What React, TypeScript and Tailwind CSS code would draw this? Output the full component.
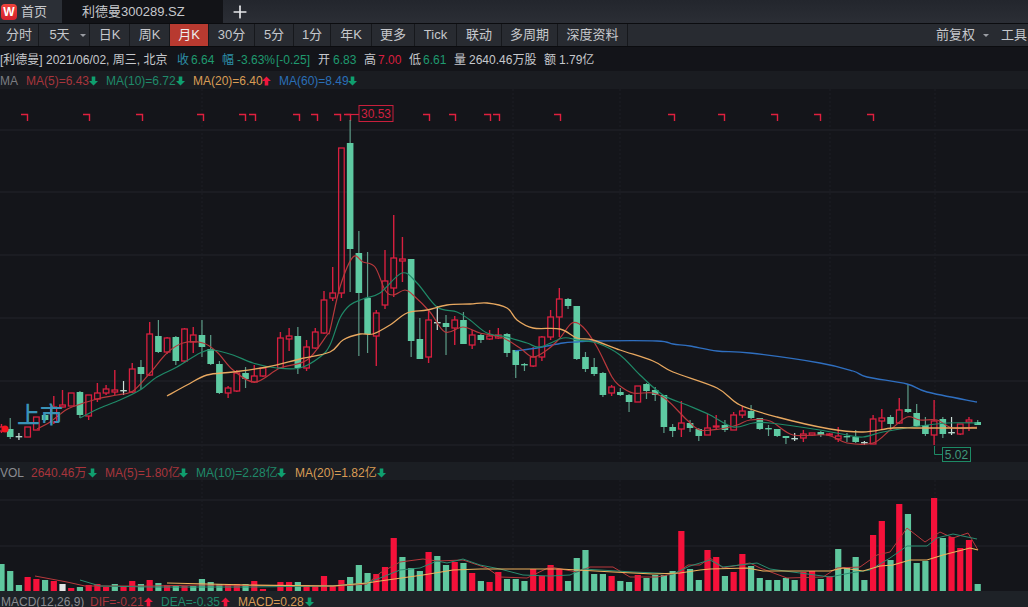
import React from "react";
import { Plus } from "lucide-react";

const FONT = '"Liberation Sans", "Noto Sans CJK SC", sans-serif';

// [high, bodyTop, bodyBottom, low, colour] in page pixels. r = up, g = down, w = flat, n = no trade
type Candle = [number, number, number, number, string];
const candles: Candle[] = [
  [424, 427, 431, 433, "r"], [418, 429, 437, 439, "g"], [433, 436, 437, 440, "w"], [427, 427, 437, 437, "r"],
  [417, 417, 430, 430, "r"], [413, 415, 420, 421, "g"], [396, 407, 422, 424, "r"], [390, 405, 407, 408, "r"],
  [393, 393, 406, 406, "r"], [391, 392, 415, 418, "g"], [395, 395, 416, 420, "r"], [383, 393, 399, 402, "r"],
  [385, 389, 393, 395, "r"], [370, 390, 392, 395, "r"], [381, 390, 391, 395, "w"], [363, 369, 392, 393, "r"],
  [360, 367, 374, 389, "g"], [322, 334, 375, 376, "r"], [320, 336, 352, 353, "g"], [337, 338, 352, 354, "r"],
  [336, 337, 361, 365, "g"], [328, 329, 361, 363, "r"], [327, 335, 342, 353, "r"], [320, 335, 347, 357, "g"],
  [335, 349, 364, 365, "g"], [361, 364, 393, 394, "g"], [386, 388, 393, 398, "r"], [370, 373, 391, 392, "r"],
  [367, 373, 379, 388, "g"], [365, 376, 382, 383, "r"], [367, 368, 376, 377, "r"], [0, 0, 0, 0, "n"],
  [332, 338, 368, 369, "r"], [328, 336, 339, 351, "r"], [327, 336, 368, 374, "g"], [340, 347, 368, 371, "r"],
  [328, 332, 348, 349, "r"], [291, 300, 333, 334, "r"], [267, 293, 298, 301, "r"], [148, 148, 293, 298, "r"],
  [120, 143, 249, 292, "g"], [231, 253, 293, 356, "g"], [252, 298, 334, 353, "g"], [310, 313, 336, 366, "r"],
  [250, 281, 305, 309, "r"], [215, 258, 288, 297, "r"], [237, 259, 261, 282, "r"], [259, 259, 341, 357, "g"],
  [318, 339, 359, 359, "g"], [310, 320, 357, 363, "r"], [306, 322, 323, 330, "w"], [315, 323, 327, 355, "g"],
  [316, 320, 328, 345, "r"], [312, 320, 344, 344, "g"], [330, 335, 345, 349, "r"], [334, 335, 340, 343, "g"],
  [330, 336, 339, 340, "r"], [328, 335, 338, 339, "r"], [333, 334, 353, 357, "g"], [350, 350, 365, 378, "g"],
  [363, 364, 365, 371, "g"], [347, 357, 366, 367, "r"], [336, 337, 357, 361, "r"], [310, 317, 337, 340, "r"],
  [288, 299, 317, 337, "r"], [298, 299, 306, 309, "g"], [306, 306, 359, 360, "g"], [352, 357, 369, 372, "g"],
  [358, 367, 374, 376, "g"], [372, 373, 395, 397, "g"], [385, 387, 393, 396, "r"], [388, 392, 395, 396, "g"],
  [394, 395, 402, 412, "g"], [386, 386, 402, 402, "r"], [383, 384, 391, 399, "g"], [387, 390, 395, 401, "g"],
  [395, 395, 427, 433, "g"], [424, 427, 431, 437, "g"], [401, 423, 429, 437, "r"], [420, 423, 428, 432, "g"],
  [428, 429, 436, 441, "g"], [414, 428, 435, 435, "r"], [415, 426, 427, 429, "r"], [420, 425, 430, 432, "g"],
  [412, 415, 430, 430, "r"], [406, 411, 415, 418, "r"], [405, 411, 418, 419, "g"], [418, 418, 429, 430, "g"],
  [425, 428, 429, 436, "g"], [429, 429, 436, 437, "g"], [436, 436, 438, 444, "g"], [433, 438, 439, 441, "w"],
  [430, 434, 438, 442, "r"], [433, 433, 435, 436, "r"], [431, 432, 435, 437, "g"], [433, 434, 435, 436, "r"],
  [427, 436, 439, 442, "r"], [433, 436, 437, 442, "g"], [430, 437, 442, 443, "g"], [441, 442, 443, 445, "w"],
  [415, 419, 444, 444, "r"], [409, 418, 421, 429, "r"], [415, 417, 424, 428, "g"], [398, 410, 423, 424, "r"],
  [384, 409, 412, 413, "g"], [404, 413, 426, 427, "g"], [417, 425, 434, 436, "g"], [400, 421, 435, 445, "r"],
  [417, 419, 434, 438, "g"], [417, 432, 433, 435, "w"], [424, 424, 434, 435, "r"], [417, 420, 422, 431, "r"],
  [420, 422, 425, 425, "g"],
];

// bar height, colour
const vols: [number, string][] = [
  [27, "g"], [20, "g"], [6, "g"], [14, "r"], [12, "r"], [11, "g"], [10, "r"], [7, "w"], [3, "r"], [4, "g"],
  [6, "r"], [7, "r"], [4, "r"], [7, "g"], [5, "r"], [10, "r"], [7, "g"], [11, "r"], [8, "g"], [6, "r"],
  [5, "g"], [5, "r"], [5, "g"], [12, "g"], [9, "g"], [7, "g"], [7, "r"], [7, "r"], [7, "g"], [10, "r"],
  [2, "r"], [0, "r"], [9, "r"], [9, "r"], [9, "g"], [6, "r"], [5, "r"], [15, "r"], [6, "r"], [11, "r"],
  [14, "g"], [26, "g"], [18, "g"], [17, "r"], [24, "r"], [53, "r"], [34, "g"], [23, "g"], [20, "g"], [39, "r"],
  [35, "g"], [26, "g"], [29, "r"], [28, "g"], [18, "r"], [10, "g"], [9, "r"], [19, "r"], [12, "g"], [12, "g"],
  [10, "g"], [22, "r"], [15, "r"], [26, "r"], [22, "r"], [10, "g"], [33, "g"], [41, "g"], [17, "g"], [17, "g"],
  [15, "r"], [10, "g"], [9, "g"], [16, "r"], [13, "g"], [16, "g"], [16, "g"], [20, "g"], [60, "r"], [22, "g"],
  [11, "g"], [41, "r"], [34, "r"], [15, "g"], [19, "r"], [37, "r"], [25, "g"], [13, "g"], [11, "g"], [11, "g"],
  [13, "g"], [11, "g"], [19, "r"], [20, "r"], [12, "g"], [15, "r"], [42, "g"], [24, "g"], [34, "g"], [11, "g"],
  [56, "r"], [70, "r"], [31, "g"], [87, "r"], [77, "g"], [28, "g"], [30, "g"], [93, "r"], [53, "g"], [54, "r"],
  [43, "r"], [51, "r"], [7, "g"],
];

const ma5 = "37,429 50,422 63,412 72,407 97,399 117,395 133,391 150,373 167,353 183,343 203,343 217,352 233,370 255,382 280,368 307,360 327,335 330,330 340,287 353,257 363,262 375,267 385,290 393,295 405,290 413,295 430,312 445,332 463,327 480,333 503,338 520,348 533,357 547,350 560,338 572,323 583,327 597,347 612,377 620,386 633,393 653,393 667,400 687,420 700,430 720,429 737,425 750,420 770,421 793,435 827,435 847,443 873,443 890,430 907,417 920,420 937,420 953,428 977,427";
const ma10 = "80,418 100,408 120,400 140,390 157,377 177,367 200,353 213,350 233,355 253,363 277,368 300,368 320,357 330,345 340,318 350,305 363,299 380,293 402,273 417,283 437,307 457,312 470,320 487,333 507,337 527,343 540,347 563,338 577,340 597,343 620,355 640,375 663,395 687,405 710,415 733,427 753,423 770,423 820,430 847,435 863,437 883,432 913,427 947,423 977,423";
const ma20 = "167,396 187,385 207,375 233,372 267,367 300,359 330,352 343,340 360,334 373,334 390,325 407,313 427,310 447,305 470,304 487,303 507,308 517,320 533,328 560,329 577,338 593,340 620,350 653,361 673,372 717,388 740,405 777,417 830,429 863,432 893,428 920,428 977,428";
const ma60 = "515,351 537,348 563,343 577,342 593,341 657,341 673,344 690,346 717,351 750,353 820,363 853,371 867,377 907,384 927,392 977,402";

const volMa5 = "35,576 67,582 85,586 150,586 200,585 300,586 340,586 367,584 380,573 400,562 423,559 437,561 463,560 487,568 500,577 527,578 550,567 577,572 590,567 613,567 630,577 657,577 677,573 688,565 700,565 710,558 723,568 750,563 760,568 787,578 823,577 837,568 860,567 877,555 890,552 907,528 925,542 940,532 953,538 968,533 978,550";
const volMa10 = "80,580 100,586 150,587 250,587 330,586 367,583 380,578 400,570 420,568 437,561 447,563 463,559 480,565 500,569 523,575 550,576 570,575 583,569 633,572 657,573 673,574 690,566 710,560 723,567 757,563 770,569 800,573 830,577 850,573 870,570 890,558 907,546 927,546 937,538 953,534 977,539";
const volMa20 = "167,583 250,585 333,586 367,583 380,581 423,575 453,570 480,569 513,569 560,569 613,572 653,574 680,573 700,570 710,569 747,568 763,571 830,571 843,568 863,571 880,566 893,565 910,560 927,560 943,555 970,548 978,550";

const marks = [25, 87, 140, 201, 243, 253, 297, 315, 338, 348, 427, 453, 488, 497, 558, 672, 722, 775, 818, 871];
const gridX = [202, 513, 620, 830, 935];

const candleX = (i: number) => 1.5 + i * 8.716;

// catmull-rom through the points, the moving averages are not angular
const smooth = (points: string) => {
  const p = points.split(" ").map((s) => s.split(",").map(Number));
  let d = `M${p[0][0]} ${p[0][1]}`;
  for (let i = 0; i < p.length - 1; i++) {
    const a = p[Math.max(i - 1, 0)];
    const b = p[i];
    const c = p[i + 1];
    const e = p[Math.min(i + 2, p.length - 1)];
    d += ` C${b[0] + (c[0] - a[0]) / 6} ${b[1] + (c[1] - a[1]) / 6} ${c[0] - (e[0] - b[0]) / 6} ${c[1] - (e[1] - b[1]) / 6} ${c[0]} ${c[1]}`;
  }
  return d;
};

const Arrow = ({ up }: { up?: boolean }) => (
  <svg width="9" height="10" viewBox="0 0 9 10" className="shrink-0">
    <path
      d={up ? "M4.5 0.5 L9 5 L6.3 5 L6.3 9.5 L2.7 9.5 L2.7 5 L0 5 Z" : "M4.5 9.5 L9 5 L6.3 5 L6.3 0.5 L2.7 0.5 L2.7 5 L0 5 Z"}
      fill={up ? "#f0163d" : "#0f9f6e"}
    />
  </svg>
);

const Caret = () => <span className="h-0 w-0 border-x-[3px] border-t-[3px] border-x-transparent border-t-[#9a9da3]" />;

const tools: { label: string; w: string; active?: boolean; caret?: boolean }[] = [
  { label: "分时", w: "w-[39px]" },
  { label: "5天", w: "w-[51px] pl-[7px]", caret: true },
  { label: "日K", w: "w-[40px]" },
  { label: "周K", w: "w-[40px]" },
  { label: "月K", w: "w-[39px]", active: true },
  { label: "30分", w: "w-[46px]" },
  { label: "5分", w: "w-[39px]" },
  { label: "1分", w: "w-[37px]" },
  { label: "年K", w: "w-[41px]" },
  { label: "更多", w: "w-[43px]" },
  { label: "Tick", w: "w-[42px]" },
  { label: "联动", w: "w-[45px]" },
  { label: "多周期", w: "w-[56px]" },
  { label: "深度资料", w: "w-[70px]" },
];

const PriceChart = () => (
  <svg viewBox="0 89 1028 373" className="relative z-10 block h-[373px] w-full overflow-visible">
    {[130, 192, 255, 318, 381, 445].map((y) => (
      <line key={y} x1="0" x2="1028" y1={y} y2={y} stroke="#23252b" strokeWidth="1" />
    ))}
    {gridX.map((x) => (
      <line key={x} x1={x} x2={x} y1="89" y2="461" stroke="#1c1e24" strokeWidth="1" strokeDasharray="2 2" />
    ))}

    {marks.map((x) => (
      <path key={x} d={`M${x - 4} 114.5 H${x + 2.5} V121`} fill="none" stroke="#e0203f" strokeWidth="1.4" />
    ))}

    {candles.map(([high, top, bottom, low, c], i) => {
      const x = candleX(i);
      if (c === "n") return null;
      if (c === "r") {
        return (
          <g key={i} stroke="#d81f3f" fill="none">
            <line x1={x} x2={x} y1={high} y2={top} strokeWidth="1.4" />
            <line x1={x} x2={x} y1={bottom} y2={low} strokeWidth="1.4" />
            <rect x={x - 2.8} y={top} width="5.6" height={Math.max(bottom - top, 1)} strokeWidth="1.3" />
          </g>
        );
      }
      const color = c === "w" ? "#b8d8cc" : "#5ecaa2";
      return (
        <g key={i} fill={color} stroke="none">
          <rect x={x - 0.6} y={high} width="1.2" height={low - high} fill={c === "w" ? "#cfe0da" : "#5d9c88"} />
          <rect x={x - 3.3} y={top} width="6.6" height={Math.max(bottom - top, 1.4)} />
        </g>
      );
    })}

    <path d={smooth(ma60)} fill="none" stroke="#2f6fc0" strokeWidth="1.3" />
    <path d={smooth(ma5)} fill="none" stroke="#b8383c" strokeWidth="1.2" />
    <path d={smooth(ma10)} fill="none" stroke="#1f8a68" strokeWidth="1.2" />
    <path d={smooth(ma20)} fill="none" stroke="#e8a860" strokeWidth="1.3" />

    <circle cx="5" cy="429" r="3.6" fill="#f5141f" />
    <text x="17" y="423" fontSize="23" fontWeight="500" fill="#3a93b8" fontFamily={FONT}>上市</text>

    <path d="M346 114.5 H359" stroke="#d81f3f" strokeWidth="1.2" />
    <rect x="359" y="105.5" width="34" height="16" fill="#14151a" stroke="#c81f3c" strokeWidth="1" />
    <text x="376" y="117.5" fontSize="12" textAnchor="middle" fill="#d02040" fontFamily={FONT}>30.53</text>

    <path d="M934.5 446 V454.5 H942" fill="none" stroke="#1d8a65" strokeWidth="1" />
    <rect x="942.5" y="447.5" width="28" height="14" fill="#14151a" stroke="#1d8a65" strokeWidth="1" />
    <text x="956.5" y="458.5" fontSize="12" textAnchor="middle" fill="#3f9a7c" fontFamily={FONT}>5.02</text>
  </svg>
);

const VolumeChart = () => (
  <svg viewBox="0 480 1028 111" className="block h-[111px] w-full">
    {[500, 546].map((y) => (
      <line key={y} x1="0" x2="1028" y1={y} y2={y} stroke="#23252b" strokeWidth="1" />
    ))}
    {gridX.map((x) => (
      <line key={x} x1={x} x2={x} y1="480" y2="591" stroke="#1c1e24" strokeWidth="1" strokeDasharray="2 2" />
    ))}
    {vols.map(([h, c], i) => (
      <rect
        key={i}
        x={candleX(i) - 3.1}
        y={591 - h}
        width="6.2"
        height={h}
        fill={c === "r" ? "#f5113a" : c === "w" ? "#e2e4e4" : "#5fc79e"}
      />
    ))}
    <polyline points={volMa5} fill="none" stroke="#b8383c" strokeWidth="1" />
    <polyline points={volMa10} fill="none" stroke="#2a8c70" strokeWidth="1" />
    <polyline points={volMa20} fill="none" stroke="#eeb25c" strokeWidth="1.2" />
  </svg>
);

export default function App() {
  return (
    <div className="flex h-[607px] w-[1028px] flex-col overflow-hidden bg-[#14151a] text-[#c6c8cc] font-['Liberation_Sans','Noto_Sans_CJK_SC',sans-serif]">
      {/* Tabs */}
      <div className="flex h-[23px] shrink-0 items-stretch bg-gradient-to-b from-[#23262d] to-[#2b2e35]">
        <div className="flex w-[62px] items-center gap-1 bg-[#2b2f36] pl-[1px] text-[13px]">
          <span className="flex h-4 w-4 items-center justify-center rounded-[4px] bg-gradient-to-b from-[#f0443c] to-[#d41f2c] text-[12px] font-bold leading-none text-white">W</span>
          <span>首页</span>
        </div>
        <div className="flex w-[161px] items-center bg-[#121317] pl-[20px] text-[13px]">利德曼300289.SZ</div>
        <div className="flex items-center pl-[7px] text-[#e6e7ea]">
          <Plus size={20} strokeWidth={2} />
        </div>
      </div>

      {/* Period toolbar */}
      <div className="flex h-[24px] shrink-0 items-stretch border-y border-[#0b0c0f] bg-[#282b31] text-[13px]">
        {tools.map((t) => (
          <div
            key={t.label}
            className={`flex items-center justify-center gap-[10px] border-r border-[#16181c] ${t.w} ${t.active ? "bg-[#b83a30] text-[#eee]" : ""}`}
          >
            {t.label}
            {t.caret && <Caret />}
          </div>
        ))}
        <div className="ml-auto flex items-center gap-[8px] pr-[1px]">
          <span>前复权</span>
          <Caret />
          <span className="ml-[4px]">工具</span>
        </div>
      </div>

      {/* Quote line */}
      <div className="flex h-[24px] shrink-0 items-center whitespace-nowrap bg-[#131419] pt-[2px] text-[12px]">
        <span className="w-[46px]">[利德曼]</span>
        <span className="w-[131px]">2021/06/02, 周三, 北京</span>
        <span className="w-[14px] text-[#2d8ea8]">收</span>
        <span className="w-[31px] text-[#1f9a6f]">6.64</span>
        <span className="w-[15px] text-[#2d8ea8]">幅</span>
        <span className="w-[39px] text-[#1f9a6f]">-3.63%</span>
        <span className="w-[42px] text-[#1f9a6f]">[-0.25]</span>
        <span className="w-[15px]">开</span>
        <span className="w-[31px] text-[#1f9a6f]">6.83</span>
        <span className="w-[14px]">高</span>
        <span className="w-[31px] text-[#d81f3f]">7.00</span>
        <span className="w-[14px]">低</span>
        <span className="w-[31px] text-[#1f9a6f]">6.61</span>
        <span className="w-[15px]">量</span>
        <span className="w-[75px]">2640.46万股</span>
        <span className="w-[15px]">额</span>
        <span>1.79亿</span>
      </div>

      {/* MA legend */}
      <div className="flex h-[18px] shrink-0 items-center whitespace-nowrap bg-[#1a1c21] pt-[2px] text-[12px]">
        <span className="w-[26px] text-[#7b7d82]">MA</span>
        <span className="w-[63px] text-[#a8353c]">MA(5)=6.43</span>
        <Arrow />
        <span className="ml-[8px] w-[70px] text-[#1f8a6a]">MA(10)=6.72</span>
        <Arrow />
        <span className="ml-[8px] w-[69px] text-[#d99c55]">MA(20)=6.40</span>
        <Arrow up />
        <span className="ml-[8px] w-[69px] text-[#2a6fb8]">MA(60)=8.49</span>
        <Arrow />
      </div>

      <PriceChart />

      {/* VOL legend */}
      <div className="flex h-[18px] shrink-0 items-center whitespace-nowrap bg-[#1b1e23] pt-[3px] text-[12px]">
        <span className="w-[31px] text-[#8a8c91]">VOL</span>
        <span className="w-[57px] text-[#a8353c]">2640.46万</span>
        <Arrow />
        <span className="ml-[8px] w-[74px] text-[#a8353c]">MA(5)=1.80亿</span>
        <Arrow />
        <span className="ml-[8px] w-[81px] text-[#1f8a6a]">MA(10)=2.28亿</span>
        <Arrow />
        <span className="ml-[9px] w-[82px] text-[#d99c55]">MA(20)=1.82亿</span>
        <Arrow />
      </div>

      <VolumeChart />

      {/* MACD legend */}
      <div className="flex min-h-0 flex-1 items-center whitespace-nowrap bg-[#1e2227] pt-[5px] pl-[1px] text-[12px]">
        <span className="w-[89px] text-[#8a8c91]">MACD(12,26,9)</span>
        <span className="w-[54px] text-[#a8353c]">DIF=-0.21</span>
        <Arrow up />
        <span className="ml-[8px] w-[60px] text-[#1f8a6a]">DEA=-0.35</span>
        <Arrow up />
        <span className="ml-[8px] w-[67px] text-[#d99c55]">MACD=0.28</span>
        <Arrow />
      </div>
    </div>
  );
}
